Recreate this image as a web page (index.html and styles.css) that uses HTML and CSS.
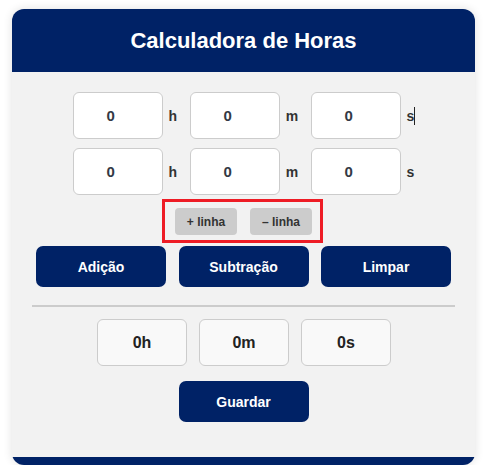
FILE: index.html
```html
<!DOCTYPE html>
<html lang="pt">
<head>
<meta charset="utf-8">
<title>Calculadora de Horas</title>
<link rel="stylesheet" href="styles.css">
</head>
<body>
<div class="card">
  <header class="card-header">
    <h1 class="title">Calculadora de Horas</h1>
  </header>
  <main class="card-body">
    <div class="rows">
      <div class="time-row">
        <div class="field"><input class="num" type="text" value="0"><span class="unit">h</span></div>
        <div class="field"><input class="num" type="text" value="0"><span class="unit">m</span></div>
        <div class="field"><input class="num" type="text" value="0"><span class="unit unit-caret">s</span></div>
      </div>
      <div class="time-row">
        <div class="field"><input class="num" type="text" value="0"><span class="unit">h</span></div>
        <div class="field"><input class="num" type="text" value="0"><span class="unit">m</span></div>
        <div class="field"><input class="num" type="text" value="0"><span class="unit">s</span></div>
      </div>
    </div>
    <div class="line-controls-wrap">
      <div class="line-controls">
        <button class="small-btn" type="button">+ linha</button>
        <button class="small-btn" type="button">– linha</button>
      </div>
    </div>
    <div class="actions">
      <button class="btn" type="button">Adição</button>
      <button class="btn" type="button">Subtração</button>
      <button class="btn" type="button">Limpar</button>
    </div>
    <hr class="divider">
    <div class="results">
      <div class="result">0h</div>
      <div class="result">0m</div>
      <div class="result">0s</div>
    </div>
    <div class="save">
      <button class="btn" type="button">Guardar</button>
    </div>
  </main>
  <footer class="card-footer"></footer>
</div>
</body>
</html>
```
FILE: styles.css
```css
* { box-sizing: border-box; }

html, body {
  margin: 0;
  padding: 0;
  background: #ffffff;
  font-family: "Liberation Sans", Arial, sans-serif;
}

body {
  padding: 9px 10px 0 12px;
}

.card {
  width: 463px;
  background: #f2f2f2;
  border-radius: 12px;
  overflow: hidden;
  box-shadow: 0 0 10px rgba(0, 0, 0, 0.12);
}

.card-header {
  background: #002266;
  height: 63px;
  display: flex;
  align-items: center;
  justify-content: center;
}

.title {
  margin: 0;
  color: #ffffff;
  font-size: 22px;
  font-weight: bold;
  line-height: 1;
}

.card-body {
  padding: 20px 20px 35px;
}

.rows {
  display: flex;
  flex-direction: column;
  gap: 9px;
}

.time-row {
  display: flex;
  justify-content: center;
  gap: 12.5px;
}

.field {
  display: flex;
  align-items: baseline;
  gap: 6px;
}

.num {
  width: 90px;
  height: 47px;
  border: 1px solid #cccccc;
  border-radius: 6px;
  background: #ffffff;
  text-align: center;
  font-family: "Liberation Sans", Arial, sans-serif;
  font-size: 15px;
  font-weight: bold;
  color: #333a45;
  padding: 0 14px 0 0;
  margin: 0;
  outline: none;
}

.unit {
  font-size: 14px;
  font-weight: bold;
  color: #333333;
  position: relative;
}

.unit-caret::after {
  content: "";
  position: absolute;
  left: 100%;
  top: -1px;
  width: 1px;
  height: 18px;
  background: #222222;
}

.line-controls-wrap {
  display: flex;
  justify-content: center;
  margin-top: 4px;
}

.line-controls {
  display: flex;
  gap: 13px;
  border: 3px solid #ee1c25;
  padding: 6px 8px 5px 10px;
  margin-left: -2px;
}

.small-btn {
  width: 62px;
  height: 27px;
  border: none;
  border-radius: 4px;
  background: #cccccc;
  color: #333333;
  font-family: "Liberation Sans", Arial, sans-serif;
  font-size: 12px;
  font-weight: bold;
  padding: 0;
}

.actions {
  display: flex;
  justify-content: center;
  gap: 12.5px;
  margin-top: 3px;
}

.btn {
  width: 130px;
  height: 41px;
  border: none;
  border-radius: 7px;
  background: #002266;
  color: #ffffff;
  font-family: "Liberation Sans", Arial, sans-serif;
  font-size: 14px;
  font-weight: bold;
  padding: 0;
}

.divider {
  border: none;
  height: 2px;
  background: #cccccc;
  margin: 18px 0 0;
}

.results {
  display: flex;
  justify-content: center;
  gap: 12px;
  margin-top: 12px;
  padding-left: 1px;
}

.result {
  width: 90px;
  height: 47px;
  border: 1px solid #cccccc;
  border-radius: 6px;
  background: #f9f9f9;
  display: flex;
  align-items: center;
  justify-content: center;
  font-size: 16px;
  font-weight: bold;
  color: #222222;
}

.save {
  display: flex;
  justify-content: center;
  margin-top: 15px;
}

.card-footer {
  background: #002266;
  height: 8px;
}
```
